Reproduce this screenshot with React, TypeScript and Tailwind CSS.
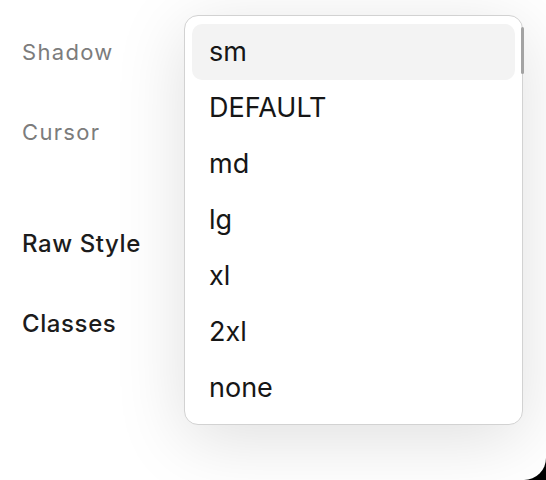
import React from 'react';

const options = ["sm", "DEFAULT", "md", "lg", "xl", "2xl", "none"];

export default function App() {
  const selected = "sm";

  return (
    <div className="w-[546px] h-[480px] bg-black" style={{ fontFamily: 'Inter, "Noto Sans", sans-serif' }}>
      <div className="relative w-full h-full bg-white rounded-br-[22px] overflow-hidden">
        {/* Settings labels */}
        <div className="flex flex-col pt-[12px] pl-[22px]">
          <div className="h-[80px] flex items-center text-[22px] tracking-[0.06em] text-[#7c7c7c]">Shadow</div>
          <div className="h-[80px] flex items-center text-[22px] tracking-[0.06em] text-[#7c7c7c]">Cursor</div>
          <div className="h-[32px]" />
          <div className="h-[80px] flex items-center text-[24px] font-medium tracking-[0.025em] text-[#1c1c1c]">Raw Style</div>
          <div className="h-[80px] flex items-center text-[24px] font-medium tracking-[0.025em] text-[#1c1c1c]">Classes</div>
        </div>

        {/* Dropdown menu */}
        <div className="absolute left-[184px] top-[15px] w-[339px] rounded-[14px] border border-[#d2d2d2] bg-white py-[8px] px-[7px] shadow-[0_14px_70px_rgba(0,0,0,0.13)]">
          {options.map((opt) => (
            <div
              key={opt}
              className={`h-[56px] flex items-center pl-[17px] rounded-[10px] text-[27px] text-[#161616] ${
                opt === selected ? 'bg-[#f3f3f3]' : ''
              }`}
            >
              {opt}
            </div>
          ))}
          <div className="absolute right-[-2px] top-[11px] w-[3px] h-[47px] rounded-full bg-[#a3a3a3]" />
        </div>
      </div>
    </div>
  );
}
